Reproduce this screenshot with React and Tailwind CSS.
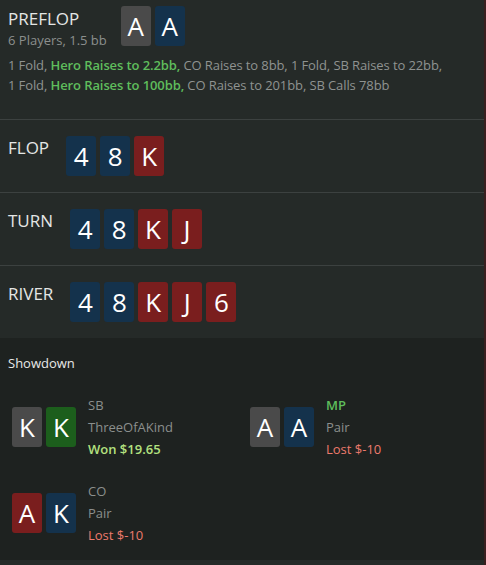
import React from "react";

const COLORS = {
  g: "bg-[#4a4a4a]",
  b: "bg-[#14324c]",
  r: "bg-[#7a1e1e]",
  n: "bg-[#1c5e1c]",
};

function Card({ v, c }) {
  return (
    <div
      className={`w-[30px] h-10 rounded-[3px] flex items-center justify-center text-white text-[26px] leading-none ${COLORS[c]}`}
    >
      {v}
    </div>
  );
}

function Cards({ list }) {
  return (
    <div className="flex gap-1">
      {list.map((x, i) => (
        <Card key={i} v={x[0]} c={x[1]} />
      ))}
    </div>
  );
}

function Street({ label, cards }) {
  return (
    <div className="border-t border-[#3c4140] px-2 py-4 flex items-start">
      <div className="text-[17px] leading-[23px] text-[#e4e6e5]">{label}</div>
      <div className="ml-[17px]">
        <Cards list={cards} />
      </div>
    </div>
  );
}

function Player({ cards, pos, posCls, hand, result, resCls }) {
  return (
    <div className="flex items-center">
      <Cards list={cards} />
      <div className="ml-3 text-[13px] leading-[22px]">
        <div className={posCls}>{pos}</div>
        <div className="text-[#8b8f8d]">{hand}</div>
        <div className={resCls}>{result}</div>
      </div>
    </div>
  );
}

export default function App() {
  return (
    <div className="w-[486px] min-h-[565px] bg-[#252a28] border-r-2 border-[#3a1f1f] font-['Open_Sans',sans-serif]">
      <div className="px-2 pt-[6px] pb-6">
        <div className="flex items-start">
          <div>
            <div className="text-[17px] leading-[25px] text-[#e4e6e5]">PREFLOP</div>
            <div className="text-[13px] leading-[18px] text-[#8b8f8d]">6 Players, 1.5 bb</div>
          </div>
          <div className="ml-[14px]">
            <Cards list={[["A", "g"], ["A", "b"]]} />
          </div>
        </div>
        <p className="mt-[7px] text-[13px] leading-[19.5px] tracking-[-0.1px] text-[#8f9391]">
          1 Fold, <span className="font-semibold text-[#5fbd5c]">Hero Raises to 2.2bb,</span> CO Raises to 8bb, 1 Fold, SB Raises to 22bb,
          <br />
          1 Fold, <span className="font-semibold text-[#5fbd5c]">Hero Raises to 100bb,</span> CO Raises to 201bb, SB Calls 78bb
        </p>
      </div>
      <Street label="FLOP" cards={[["4", "b"], ["8", "b"], ["K", "r"]]} />
      <Street label="TURN" cards={[["4", "b"], ["8", "b"], ["K", "r"], ["J", "r"]]} />
      <Street label="RIVER" cards={[["4", "b"], ["8", "b"], ["K", "r"], ["J", "r"], ["6", "r"]]} />
      <div className="bg-[#1e2220] pt-4 pb-[14px]">
        <div className="px-2 text-[13px] leading-[18px] font-medium text-[#e8e9e8]">Showdown</div>
        <div className="mt-[22px] px-3 grid grid-cols-[238px_1fr] gap-y-5">
          <Player
            cards={[["K", "g"], ["K", "n"]]}
            pos="SB"
            posCls="text-[#8b8f8d]"
            hand="ThreeOfAKind"
            result="Won $19.65"
            resCls="font-semibold text-[#b3e07f]"
          />
          <Player
            cards={[["A", "g"], ["A", "b"]]}
            pos="MP"
            posCls="font-semibold text-[#5fbd5c]"
            hand="Pair"
            result="Lost $-10"
            resCls="text-[#ec7a6c]"
          />
          <Player
            cards={[["A", "r"], ["K", "b"]]}
            pos="CO"
            posCls="text-[#8b8f8d]"
            hand="Pair"
            result="Lost $-10"
            resCls="text-[#ec7a6c]"
          />
        </div>
      </div>
    </div>
  );
}
